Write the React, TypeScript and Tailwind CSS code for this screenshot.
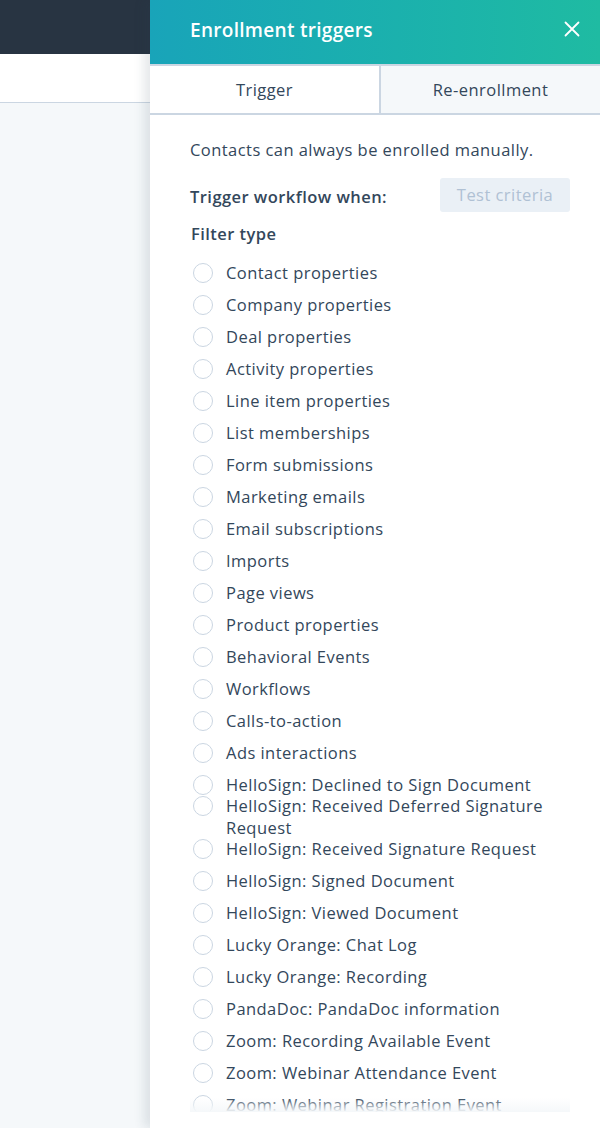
import React from 'react';

const filterTypes = [
  'Contact properties',
  'Company properties',
  'Deal properties',
  'Activity properties',
  'Line item properties',
  'List memberships',
  'Form submissions',
  'Marketing emails',
  'Email subscriptions',
  'Imports',
  'Page views',
  'Product properties',
  'Behavioral Events',
  'Workflows',
  'Calls-to-action',
  'Ads interactions',
  'HelloSign: Declined to Sign Document',
  'HelloSign: Received Deferred Signature Request',
  'HelloSign: Received Signature Request',
  'HelloSign: Signed Document',
  'HelloSign: Viewed Document',
  'Lucky Orange: Chat Log',
  'Lucky Orange: Recording',
  'PandaDoc: PandaDoc information',
  'Zoom: Recording Available Event',
  'Zoom: Webinar Attendance Event',
  'Zoom: Webinar Registration Event',
];

const App: React.FC = () => {
  return (
    <div className="flex h-[1128px] w-[600px] overflow-hidden bg-[#f5f8fa] font-['Open_Sans',sans-serif] text-[16.5px] tracking-[0.45px] text-[#33475b]">
      {/* page behind the panel */}
      <div className="flex w-[150px] shrink-0 flex-col">
        <div className="h-[54px] bg-[#283442]" />
        <div className="h-[49px] border-b border-[#cbd6e2] bg-white" />
        <div className="flex-1 bg-[#f5f8fa]" />
      </div>

      {/* side panel */}
      <div className="relative flex w-[450px] flex-col bg-white shadow-[-6px_0_10px_rgba(45,62,80,0.12)]">
        <div className="flex h-[64px] shrink-0 items-center justify-between bg-gradient-to-r from-[#19a4b9] to-[#1fbba2] pb-[4px] pl-[40px] pr-[13px]">
          <h2 className="text-[19px] font-semibold tracking-[0.3px] text-white">Enrollment triggers</h2>
          <button className="-mt-[2px] flex h-[30px] w-[30px] items-center justify-center text-white">
            <svg width="16" height="16" viewBox="0 0 16 16" fill="none" stroke="currentColor" strokeWidth="1.8" strokeLinecap="round">
              <path d="M1.5 1.5l13 13M14.5 1.5l-13 13" />
            </svg>
          </button>
        </div>

        <div className="flex h-[51px] shrink-0 border-t-2 border-b-2 border-[#cbd6e2]">
          <div className="flex w-[229px] items-center justify-center bg-white pt-[2px]">Trigger</div>
          <div className="flex flex-1 items-center justify-center border-l-2 border-[#cbd6e2] bg-[#f5f8fa] pt-[2px]">
            Re-enrollment
          </div>
        </div>

        <div className="relative flex flex-1 flex-col overflow-hidden pl-[40px] pr-[30px]">
          <p className="mt-[24px] leading-[22px]">Contacts can always be enrolled manually.</p>
          <div className="mt-[17px] flex items-center justify-between">
            <span className="mt-[5px] font-semibold">Trigger workflow when:</span>
            <button className="h-[34px] w-[130px] rounded-[3px] bg-[#eaf0f6] text-[#b0c1d4]">Test criteria</button>
          </div>
          <div className="mt-[11px] pl-[1px] font-semibold leading-[22px]">Filter type</div>

          <div className="mt-[12px] flex flex-col">
            {filterTypes.map((label) => (
              <div key={label} className="flex h-[32px] shrink-0 items-center">
                <div className="flex items-start">
                  <span className="ml-[3px] mt-[1px] h-[20px] w-[20px] shrink-0 rounded-full border-[1.5px] border-[#cbd6e2] bg-white" />
                  <span className="ml-[13px] leading-[22px]">{label}</span>
                </div>
              </div>
            ))}
          </div>

          <div className="pointer-events-none absolute bottom-[16px] left-[40px] right-[30px] h-[14px] bg-gradient-to-b from-white/0 to-[#f5f8fa]" />
          <div className="absolute bottom-0 left-0 right-0 h-[16px] bg-white" />
        </div>
      </div>
    </div>
  );
};

export default App;
